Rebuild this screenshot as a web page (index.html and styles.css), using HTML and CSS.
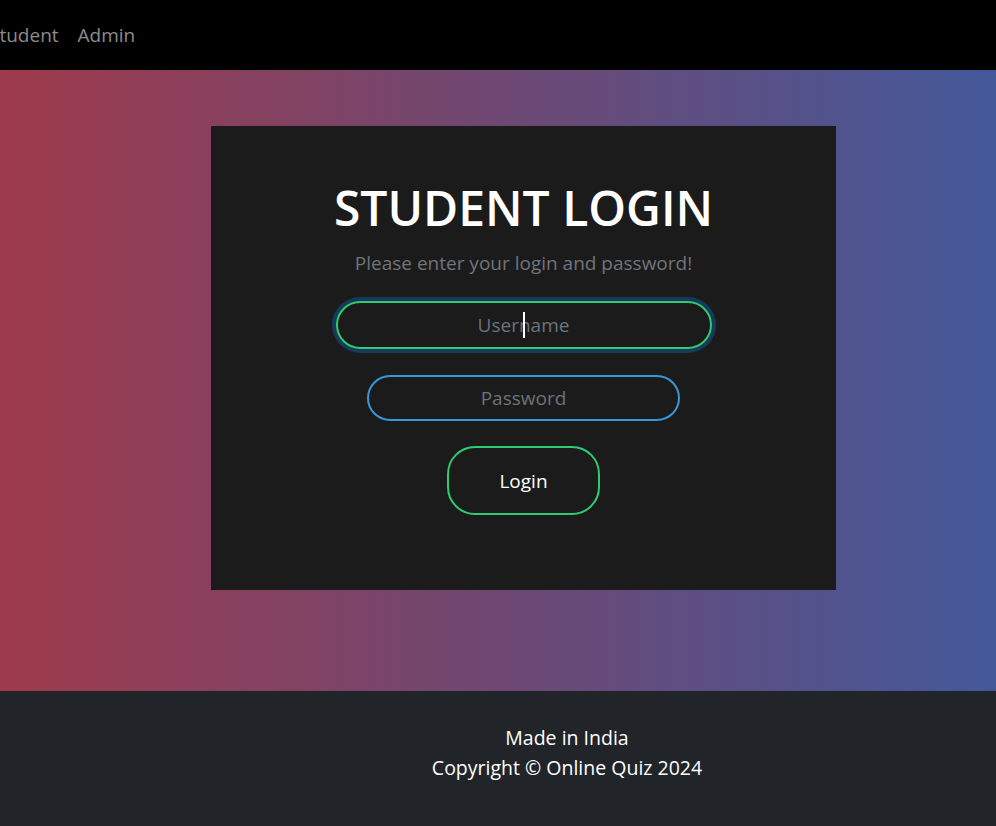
FILE: index.html
```html
<!DOCTYPE html>
<html lang="en">

<head>
    <meta charset="UTF-8">
    <meta name="viewport" content="width=device-width, initial-scale=1.0">
    <title>Student Login</title>
    <link rel="stylesheet" href="styles.css">
</head>

<body>

    <nav class="navbar">
        <ul class="nav-links">
            <li><a href="#">Student</a></li>
            <li><a href="#">Admin</a></li>
        </ul>
    </nav>

    <main class="login-section">
        <div class="login-card">
            <h1 class="login-title">STUDENT LOGIN</h1>
            <p class="login-subtitle">Please enter your login and password!</p>

            <form class="login-form">
                <div class="input-wrap focused">
                    <input type="text" class="input-user" placeholder="Username">
                </div>
                <input type="password" class="input-pass" placeholder="Password">
                <button type="submit" class="login-btn">Login</button>
            </form>
        </div>
    </main>

    <footer class="footer">
        <p>Made in India</p>
        <p>Copyright &copy; Online Quiz 2024</p>
    </footer>

</body>

</html>
```

FILE: styles.css
```css
* {
    box-sizing: border-box;
}

body {
    margin: 0;
    padding: 0;
    font-family: 'Open Sans', 'Noto Sans', sans-serif;
    overflow: hidden;
}

.navbar {
    height: 70px;
    background: #000;
    display: flex;
    align-items: center;
}

.nav-links {
    list-style: none;
    margin: 0 0 0 -11px;
    padding: 0;
    display: flex;
    gap: 19px;
}

.nav-links a {
    color: #8c8c8c;
    text-decoration: none;
    font-size: 19px;
}

.login-section {
    height: 621px;
    background: linear-gradient(to right, #9e3a4b, #6e4873 50%, #435899);
    padding-top: 56px;
}

.login-card {
    width: 625px;
    height: 464px;
    margin-left: 211px;
    background: #1b1b1b;
    padding-top: 53px;
    display: flex;
    flex-direction: column;
    align-items: center;
}

.login-title {
    margin: 0;
    color: #fff;
    font-size: 48px;
    font-weight: 600;
    line-height: 1.2;
}

.login-subtitle {
    margin: 12px 0 0;
    color: #6f757b;
    font-size: 19px;
    line-height: 1.5;
}

.login-form {
    margin-top: 24px;
    display: flex;
    flex-direction: column;
    align-items: center;
}

.input-wrap {
    position: relative;
    border-radius: 28px;
    box-shadow: 0 0 0 4px #173a5c;
}

/* fake caret, the field was focused in the shot */
.input-wrap.focused::after {
    content: '';
    position: absolute;
    left: 187px;
    top: 11px;
    width: 2px;
    height: 26px;
    background: #fff;
}

.login-form input {
    display: block;
    background: #1b1b1b;
    border-radius: 24px;
    text-align: center;
    font-family: inherit;
    font-size: 19px;
    color: #fff;
    outline: none;
}

.login-form input::placeholder {
    color: #6c737a;
}

.input-user {
    width: 376px;
    height: 48px;
    border: 2px solid #2ecc71;
}

.input-pass {
    width: 313px;
    height: 46px;
    margin-top: 26px;
    border: 2px solid #3498db;
}

.login-btn {
    width: 153px;
    height: 69px;
    margin-top: 25px;
    background: transparent;
    border: 2px solid #2ecc71;
    border-radius: 28px;
    color: #fff;
    font-family: inherit;
    font-size: 19px;
    cursor: pointer;
}

.footer {
    height: 135px;
    background: #212529;
    color: #fff;
    text-align: center;
    padding: 32px 0 0 138px;
    font-size: 19.5px;
    line-height: 30px;
}

.footer p {
    margin: 0;
}
```
